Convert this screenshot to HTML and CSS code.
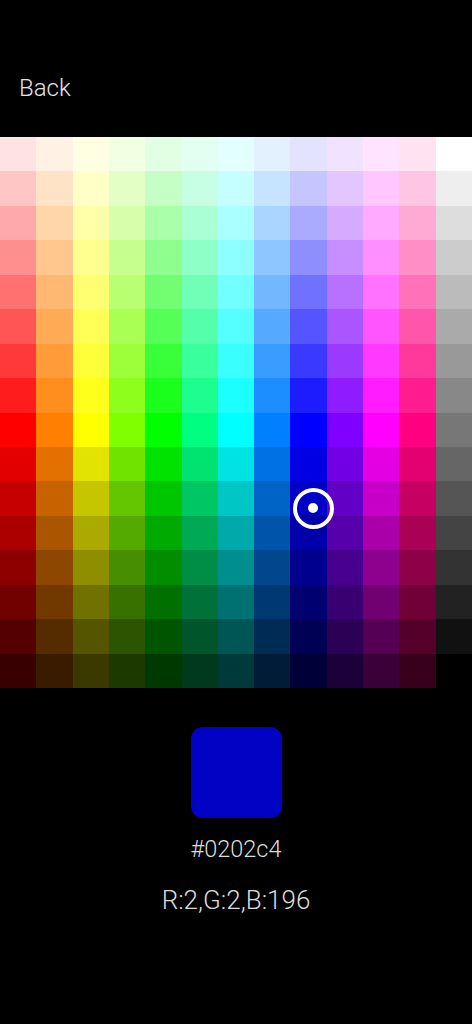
FILE: index.html
```html
<!DOCTYPE html>
<html lang="en">
<head>
<meta charset="utf-8">
<title>Color Picker</title>
<link rel="stylesheet" href="styles.css">
</head>
<body>
<header class="topbar">
  <span class="back">Back</span>
</header>
<section class="palette">
  <div class="grid" id="grid"></div>
  <div class="selector"><span class="selector-dot"></span></div>
</section>
<section class="result">
  <div class="swatch"></div>
  <div class="hex">#0202c4</div>
  <div class="rgb">R:2,G:2,B:196</div>
</section>
<script src="script.js"></script>
</body>
</html>
```
FILE: styles.css
```css
html, body {
  margin: 0;
  padding: 0;
  background: #000;
}
body {
  width: 472px;
  min-height: 1024px;
  font-family: Roboto, "Liberation Sans", sans-serif;
  font-weight: 300;
  color: #e4e4e4;
}
.topbar {
  height: 137px;
  box-sizing: border-box;
  padding: 74px 0 0 19px;
}
.back {
  font-size: 24px;
  line-height: 28px;
}
.palette {
  position: relative;
  width: 472px;
  height: 551px;
}
.grid {
  display: grid;
  grid-template-columns: repeat(13, 1fr);
  grid-template-rows: repeat(16, 1fr);
  width: 100%;
  height: 100%;
}
.selector {
  position: absolute;
  left: 292.5px;
  top: 350.5px;
  width: 41px;
  height: 41px;
  box-sizing: border-box;
  border: 4px solid #fff;
  border-radius: 50%;
  display: flex;
  align-items: center;
  justify-content: center;
}
.selector-dot {
  width: 10px;
  height: 10px;
  border-radius: 50%;
  background: #fff;
}
.result {
  display: flex;
  flex-direction: column;
  align-items: center;
  padding-top: 39px;
}
.swatch {
  width: 91px;
  height: 91px;
  border-radius: 12px;
  background: #0202c4;
}
.hex, .rgb {
  line-height: 28px;
  color: #dcdcdc;
}
.hex {
  font-size: 23.5px;
  margin-top: 17px;
}
.rgb {
  font-size: 26px;
  margin-top: 23px;
}
```
FILE: script.js
```js
(function () {
  var grid = document.getElementById('grid');
  function hsv(h, s, v) {
    var c = v * s;
    var hp = h / 60;
    var x = c * (1 - Math.abs((hp % 2) - 1));
    var r = 0, g = 0, b = 0;
    if (hp < 1) { r = c; g = x; }
    else if (hp < 2) { r = x; g = c; }
    else if (hp < 3) { g = c; b = x; }
    else if (hp < 4) { g = x; b = c; }
    else if (hp < 5) { r = x; b = c; }
    else { r = c; b = x; }
    var m = v - c;
    return 'rgb(' + Math.round((r + m) * 255) + ',' + Math.round((g + m) * 255) + ',' + Math.round((b + m) * 255) + ')';
  }
  for (var row = 0; row < 16; row++) {
    for (var col = 0; col < 13; col++) {
      var cell = document.createElement('div');
      var color;
      if (col === 12) {
        var g = 255 - 17 * row;
        color = 'rgb(' + g + ',' + g + ',' + g + ')';
      } else {
        var s = row < 8 ? (row + 1) / 9 : 1;
        var v = row < 8 ? 1 : (17 - row) / 9;
        color = hsv(col * 30, s, v);
      }
      cell.style.backgroundColor = color;
      grid.appendChild(cell);
    }
  }
})();
```
